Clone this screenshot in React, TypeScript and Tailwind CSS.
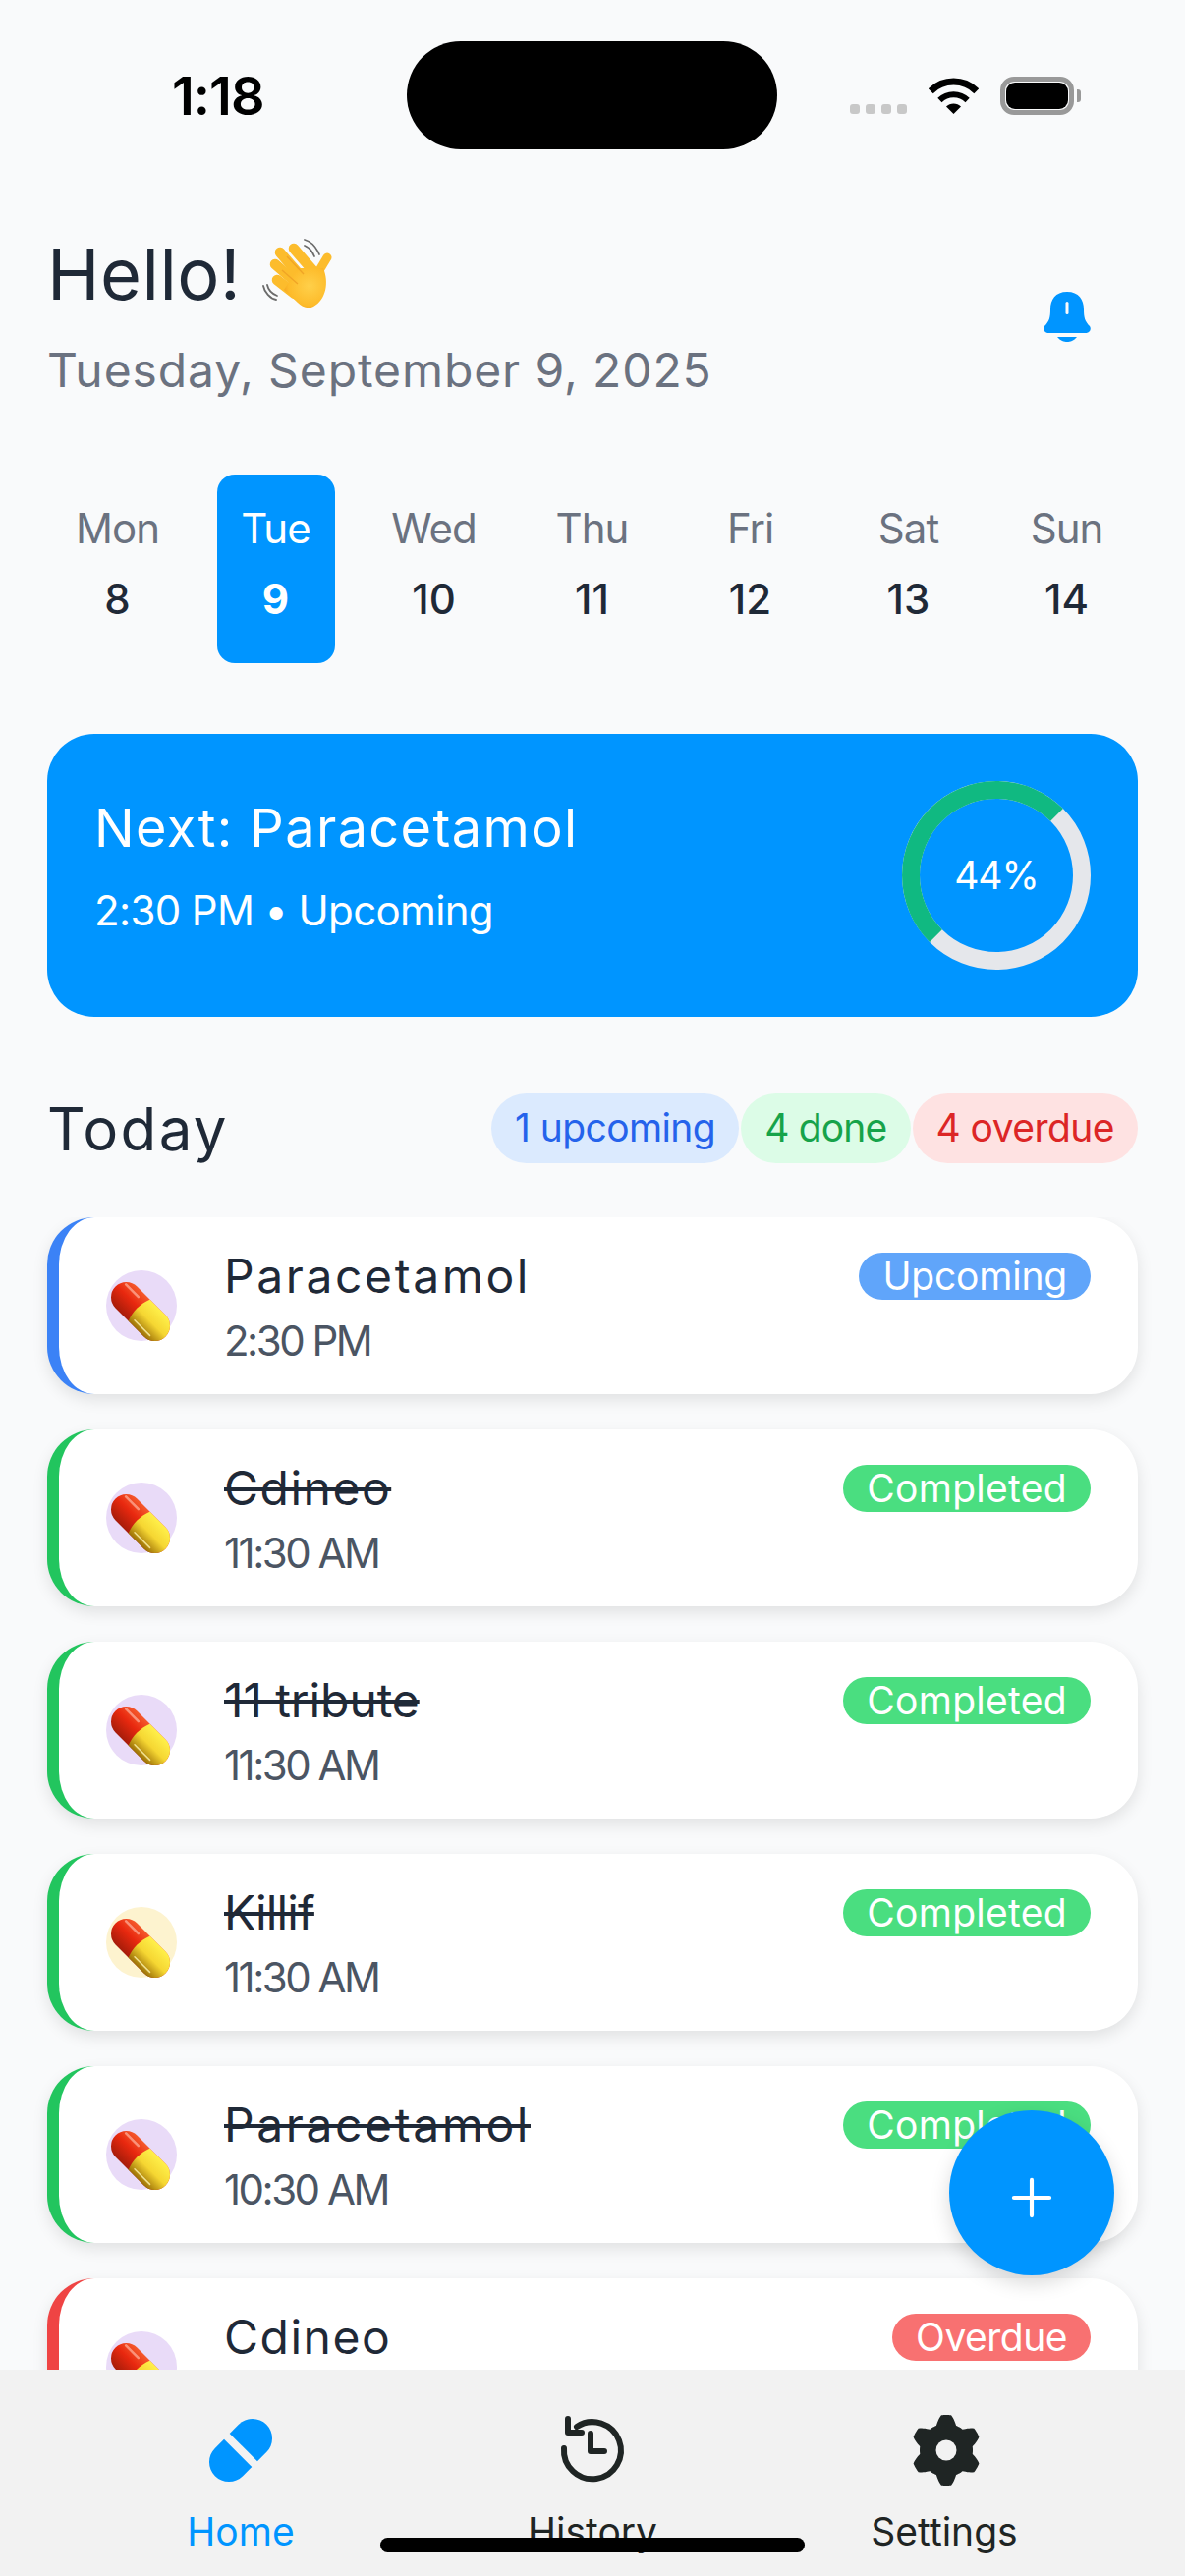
import { Plus } from 'lucide-react';

type Status = 'Upcoming' | 'Completed' | 'Overdue';

const days = [
    ['Mon', '8'],
    ['Tue', '9'],
    ['Wed', '10'],
    ['Thu', '11'],
    ['Fri', '12'],
    ['Sat', '13'],
    ['Sun', '14'],
];

const meds: { name: string; time: string; status: Status; tint: string; track: string }[] = [
    { name: 'Paracetamol', time: '2:30 PM', status: 'Upcoming', tint: 'bg-[#e9dbf8]', track: 'tracking-[2.6px]' },
    { name: 'Cdineo', time: '11:30 AM', status: 'Completed', tint: 'bg-[#e9dbf8]', track: 'tracking-[1.5px]' },
    { name: '11 tribute', time: '11:30 AM', status: 'Completed', tint: 'bg-[#e9dbf8]', track: 'tracking-[-0.1px]' },
    { name: 'Killif', time: '11:30 AM', status: 'Completed', tint: 'bg-[#fdf3cf]', track: 'tracking-[-0.9px]' },
    { name: 'Paracetamol', time: '10:30 AM', status: 'Completed', tint: 'bg-[#e9dbf8]', track: 'tracking-[2.6px]' },
    { name: 'Cdineo', time: '', status: 'Overdue', tint: 'bg-[#e9dbf8]', track: 'tracking-[1.5px]' },
];

const edge: Record<Status, string> = {
    Upcoming: 'border-l-[#3b82f6]',
    Completed: 'border-l-[#22c55e]',
    Overdue: 'border-l-[#ef4444]',
};

const pill: Record<Status, string> = {
    Upcoming: 'bg-[#60a5fa] tracking-[-0.2px]',
    Completed: 'bg-[#4ade80] tracking-[0.3px]',
    Overdue: 'bg-[#f87171] tracking-[-0.5px]',
};

// six soft lobes, sampled round the centre
const gearPath = () => {
    const pts: string[] = [];
    for (let i = 0; i < 180; i++) {
        const a = (i / 180) * Math.PI * 2;
        const c = Math.max(-1, Math.min(1, Math.cos(6 * a) * 1.5));
        const r = 31.5 + c * 4.5;
        pts.push(`${(36 + r * Math.sin(a)).toFixed(2)} ${(36 - r * Math.cos(a)).toFixed(2)}`);
    }
    return `M${pts.join('L')}Z`;
};

const WaveHand = () => (
    <svg width="72" height="72" viewBox="0 0 72 72" className="shrink-0">
        <defs>
            <radialGradient id="palm" cx="0.6" cy="0.45" r="0.7">
                <stop offset="0" stopColor="#ffd04a" />
                <stop offset="0.7" stopColor="#fdbb2a" />
                <stop offset="1" stopColor="#f09a1c" />
            </radialGradient>
        </defs>
        <g stroke="#fcbc2c" strokeWidth="10.5" strokeLinecap="round">
            <path d="M32 10 L52 33" />
            <path d="M18 14 L38 37" />
            <path d="M13 26 L35 45" />
            <path d="M15 42 L33 56" />
            <path d="M66 19 L57 34" strokeWidth="9" />
        </g>
        <path d="M36 30 L62 30 C68 44 65 62 52 69 C46 72 40 69 36 65 L22 52 Z" fill="url(#palm)" />
        <g stroke="#f0a526" strokeWidth="1.4" fill="none">
            <path d="M25 18 L42 36" />
            <path d="M20 32 L36 46" />
        </g>
        <g stroke="#6b6b6b" strokeWidth="1.8" fill="none" strokeLinecap="round">
            <path d="M43 7 C48 9 51 13 53 18" />
            <path d="M43 1 C50 3 55 9 58 16" />
            <path d="M5 47 C6 52 10 56 15 58" />
            <path d="M1 48 C2 54 8 61 14 62" />
        </g>
    </svg>
);

const Capsule = () => (
    <svg width="60" height="60" viewBox="0 0 60 60" className="overflow-visible">
        <defs>
            <linearGradient id="capRed" x1="0" y1="0" x2="0" y2="1">
                <stop offset="0" stopColor="#f55a2c" />
                <stop offset="0.45" stopColor="#e8280f" />
                <stop offset="1" stopColor="#a61c0a" />
            </linearGradient>
            <linearGradient id="capYellow" x1="0" y1="0" x2="0" y2="1">
                <stop offset="0" stopColor="#fff04a" />
                <stop offset="0.5" stopColor="#f5d632" />
                <stop offset="1" stopColor="#9c7006" />
            </linearGradient>
        </defs>
        <g transform="translate(30 30) rotate(45)">
            <rect x="-36" y="-15.5" width="72" height="31" rx="15.5" fill="url(#capRed)" />
            <path d="M-2 -15.5 H20.5 A15.5 15.5 0 0 1 20.5 15.5 H-2 C-6 6 -6 -6 -2 -15.5 Z" fill="url(#capYellow)" />
            <path d="M-30 -9 H-12" stroke="#ffb3a0" strokeWidth="2.5" strokeLinecap="round" opacity="0.7" />
            <path d="M2 10.5 H24" stroke="#fff6b0" strokeWidth="1.5" strokeLinecap="round" opacity="0.8" />
        </g>
    </svg>
);

const Ring = () => (
    <div className="relative w-[192px] h-[192px] shrink-0">
        <svg width="192" height="192" viewBox="0 0 192 192">
            <circle cx="96" cy="96" r="87" fill="none" stroke="#e5e7eb" strokeWidth="18" />
            <path d="M34.48 157.52 A87 87 0 0 1 157.52 34.48" fill="none" stroke="#10b981" strokeWidth="18" />
        </svg>
        <div className="absolute inset-0 flex items-center justify-center text-[39px] tracking-[-1px] text-white">44%</div>
    </div>
);

const MedCard = ({ med }: { med: (typeof meds)[number] }) => (
    <div className={`h-[180px] shrink-0 flex items-center bg-white rounded-[48px] border-l-[12px] pl-[48px] pr-[48px] shadow-[0_6px_16px_rgba(0,0,0,0.1)] ${edge[med.status]}`}>
        <div className={`relative w-[72px] h-[72px] rounded-full shrink-0 ${med.tint}`}>
            <div className="absolute left-[5px] top-[12px]">
                <Capsule />
            </div>
        </div>
        <div className="ml-[48px] flex-1 mt-[6px]">
            <div className={`text-[48px] leading-[66px] text-[#1f2937] ${med.track} ${med.status === 'Completed' ? 'line-through' : ''}`}>{med.name}</div>
            <div className="h-[66px] text-[42px] leading-[66px] tracking-[-2.5px] text-[#4b5563]">{med.time}</div>
        </div>
        <div className={`self-start mt-[36px] h-[48px] flex items-center px-[24px] rounded-full text-[39px] text-white ${pill[med.status]}`}>{med.status}</div>
    </div>
);

const App = () => {
    return (
        <div className="relative w-[1206px] h-[2622px] overflow-hidden flex flex-col bg-[#f9fafb] font-['Inter',sans-serif]">
            {/* status bar */}
            <div className="h-[152px] pt-[42px] shrink-0 flex items-start">
                <div className="w-[414px] h-[110px] flex items-center pl-[175px] text-[54px] font-semibold tracking-[-1px] text-black">1:18</div>
                <div className="w-[377px] h-[110px] rounded-full bg-black" />
                <div className="h-[110px] flex items-start pt-[36px]">
                    <div className="ml-[74px] mt-[28px] flex gap-[6px]">
                        <div className="w-[10px] h-[10px] rounded-[3px] bg-[#c8c8c8]" />
                        <div className="w-[10px] h-[10px] rounded-[3px] bg-[#c8c8c8]" />
                        <div className="w-[10px] h-[10px] rounded-[3px] bg-[#c8c8c8]" />
                        <div className="w-[10px] h-[10px] rounded-[3px] bg-[#c8c8c8]" />
                    </div>
                    <svg width="51" height="38" viewBox="0 0 51 38" className="ml-[22px] mt-[1px]">
                        <path d="M2.2 13.7 A33 33 0 0 1 48.8 13.7" fill="none" stroke="#000" strokeWidth="7" />
                        <path d="M11.4 23 A20 20 0 0 1 39.6 23" fill="none" stroke="#000" strokeWidth="6" />
                        <path d="M25.5 37 L18 29.5 A10.6 10.6 0 0 1 33 29.5 Z" fill="#000" />
                    </svg>
                    <div className="ml-[22px] w-[75px] h-[39px] rounded-[14px] border-[5px] border-[#999] p-[1px]">
                        <div className="w-full h-full rounded-[9px] bg-black" />
                    </div>
                    <div className="ml-[3px] mt-[13px] w-[4px] h-[13px] rounded-r-[3px] bg-[#999]" />
                </div>
            </div>

            {/* greeting */}
            <div className="mt-[86px] px-[48px] h-[170px] shrink-0 flex justify-between">
                <div>
                    <div className="flex items-center h-[88px] text-[72px] leading-[84px] tracking-[0.5px] text-[#1f2937]">
                        <span className="-mt-[6px]">Hello!</span>
                        <span className="ml-[22px] -mt-[6px]">
                            <WaveHand />
                        </span>
                    </div>
                    <div className="mt-[15px] text-[48px] leading-[72px] tracking-[0.9px] text-[#6b7280]">Tuesday, September 9, 2025</div>
                </div>
                <svg width="48" height="52" viewBox="0 0 48 52" className="mt-[59px] mr-[48px]">
                    <path d="M24 0 C12 0 7 8 7 18 C7 26 6 30 1 35 C-1 38 1 42 5 42 H43 C47 42 49 38 47 35 C42 30 41 26 41 18 C41 8 36 0 24 0 Z" fill="#0095ff" />
                    <path d="M14 46 H34 C31 50 27 51 24 51 C21 51 17 50 14 46 Z" fill="#0095ff" />
                    <rect x="22.5" y="10" width="3" height="13" rx="1.5" fill="#f9fafb" />
                </svg>
            </div>

            {/* week strip */}
            <div className="mt-[75px] pl-[39px] shrink-0 grid grid-cols-[repeat(7,161px)]">
                {days.map(([d, n], i) => (
                    <div key={d} className="flex justify-center">
                        <div className={`w-[120px] h-[192px] rounded-[18px] flex flex-col items-center pt-[30px] ${i === 1 ? 'bg-[#0095ff]' : ''}`}>
                            <div className={`text-[42px] leading-[50px] tracking-[-1px] ${i === 1 ? 'text-white' : 'text-[#6b7280]'}`}>{d}</div>
                            <div className={`mt-[22px] text-[42px] leading-[50px] ${i === 1 ? 'font-bold text-white' : 'font-medium text-[#1f2937]'}`}>{n}</div>
                        </div>
                    </div>
                ))}
            </div>

            {/* next dose */}
            <div className="mt-[72px] mx-[48px] h-[288px] shrink-0 rounded-[48px] bg-[#0095ff] pl-[48px] pr-[48px] flex items-center justify-between">
                <div className="-mt-[13px] text-white">
                    <div className="text-[54px] leading-[66px] tracking-[1.4px]">Next: Paracetamol</div>
                    <div className="mt-[19px] text-[42px] leading-[64px] tracking-[-0.65px]">2:30 PM • Upcoming</div>
                </div>
                <Ring />
            </div>

            {/* today */}
            <div className="mt-[78px] mx-[48px] h-[71px] shrink-0 flex items-center justify-between">
                <div className="text-[60px] tracking-[2.3px] text-[#1f2937]">Today</div>
                <div className="flex gap-[2px] text-[39px]">
                    <div className="h-[71px] flex items-center px-[24px] rounded-full bg-[#dbeafe] text-[#2563eb] tracking-[-0.6px]">1 upcoming</div>
                    <div className="h-[71px] flex items-center px-[24px] rounded-full bg-[#dcfce7] text-[#16a34a] tracking-[-0.8px]">4 done</div>
                    <div className="h-[71px] flex items-center px-[24px] rounded-full bg-[#fee2e2] text-[#dc2626] tracking-[-0.55px]">4 overdue</div>
                </div>
            </div>

            {/* list */}
            <div className="mt-[55px] px-[48px] flex-1 min-h-0 overflow-hidden flex flex-col gap-[36px]">
                {meds.map((med, i) => (
                    <MedCard key={i} med={med} />
                ))}
            </div>

            {/* tab bar */}
            <div className="h-[210px] shrink-0 bg-[#f2f2f2] px-[66px] grid grid-cols-3">
                <div className="flex flex-col items-center pt-[46px]">
                    <svg width="72" height="72" viewBox="-36 -36 72 72">
                        <g transform="rotate(-45)" fill="#0095ff">
                            <path d="M-4 -20 H-17 A20 20 0 0 0 -17 20 H-4 Z" />
                            <path d="M4 -20 H17 A20 20 0 0 1 17 20 H4 Z" />
                        </g>
                    </svg>
                    <div className="mt-[19px] text-[39px] leading-[56px] text-[#0095ff]">Home</div>
                </div>
                <div className="flex flex-col items-center pt-[46px]">
                    <svg width="72" height="72" viewBox="0 0 72 72" fill="none" stroke="#1f2524" strokeWidth="6" strokeLinecap="round" strokeLinejoin="round">
                        <path d="M7 34 A29 29 0 1 0 20 12" />
                        <path d="M11 4 V18 H25" />
                        <path d="M34 19 V37 H48" />
                    </svg>
                    <div className="mt-[19px] text-[39px] leading-[56px] text-[#1f2524]">History</div>
                </div>
                <div className="flex flex-col items-center pt-[46px]">
                    <svg width="72" height="72" viewBox="0 0 72 72" className="ml-[4px]">
                        <path d={gearPath()} fill="#1f2524" />
                        <circle cx="36" cy="36" r="10.5" fill="#f2f2f2" />
                    </svg>
                    <div className="mt-[19px] text-[39px] leading-[56px] text-[#1f2524]">Settings</div>
                </div>
            </div>

            {/* floating add button */}
            <div className="absolute left-[966px] top-[2148px] w-[168px] h-[168px] rounded-full bg-[#0095ff] flex items-center justify-center shadow-[0_8px_20px_rgba(0,0,0,0.15)]">
                <Plus size={62} strokeWidth={1.6} className="text-white mt-[10px]" />
            </div>

            {/* home indicator */}
            <div className="absolute left-[387px] top-[2583px] w-[432px] h-[15px] rounded-full bg-black" />
        </div>
    );
};

export default App;
